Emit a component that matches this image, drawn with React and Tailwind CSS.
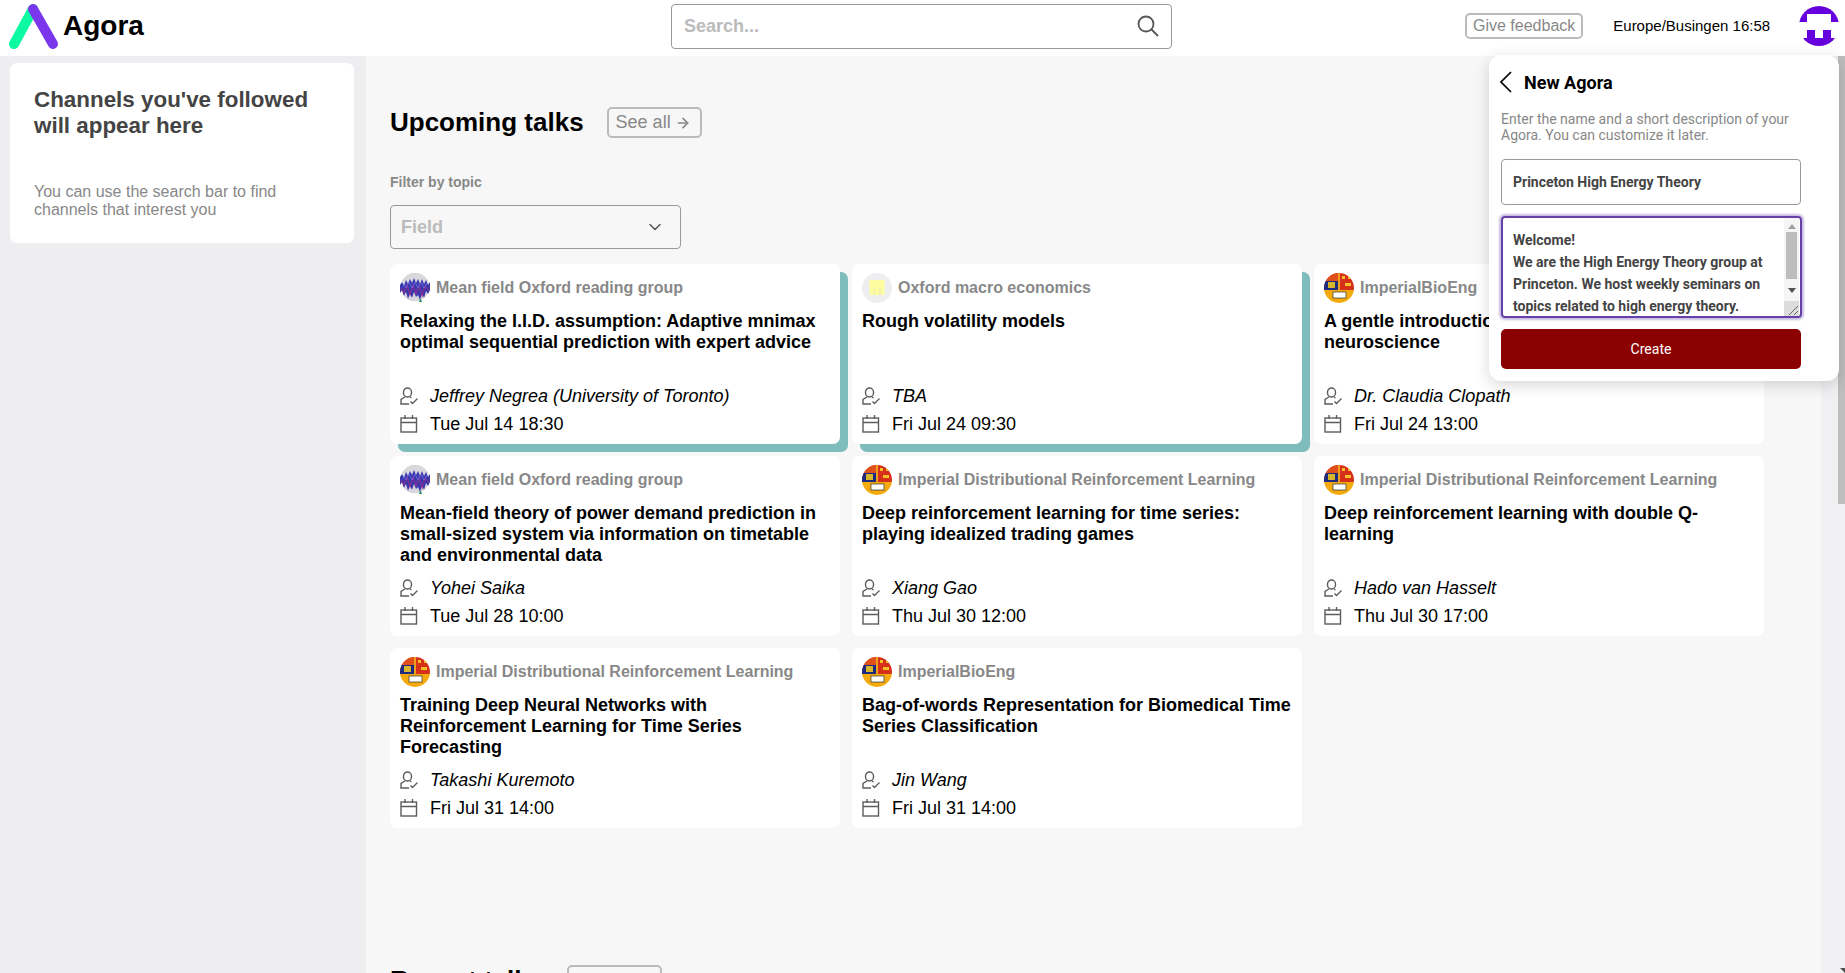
import React from 'react';
import { ArrowRight, ChevronDown } from 'lucide-react';

const talks = [
  { channel: 'Mean field Oxford reading group', avatar: 'wave', title: 'Relaxing the I.I.D. assumption: Adaptive mnimax optimal sequential prediction with expert advice', speaker: 'Jeffrey Negrea (University of Toronto)', date: 'Tue Jul 14 18:30', live: true },
  { channel: 'Oxford macro economics', avatar: 'macro', title: 'Rough volatility models', speaker: 'TBA', date: 'Fri Jul 24 09:30', live: true },
  { channel: 'ImperialBioEng', avatar: 'crest', title: 'A gentle introduction to computational neuroscience', speaker: 'Dr. Claudia Clopath', date: 'Fri Jul 24 13:00' },
  { channel: 'Mean field Oxford reading group', avatar: 'wave', title: 'Mean-field theory of power demand prediction in small-sized system via information on timetable and environmental data', speaker: 'Yohei Saika', date: 'Tue Jul 28 10:00' },
  { channel: 'Imperial Distributional Reinforcement Learning', avatar: 'crest', title: 'Deep reinforcement learning for time series: playing idealized trading games', speaker: 'Xiang Gao', date: 'Thu Jul 30 12:00' },
  { channel: 'Imperial Distributional Reinforcement Learning', avatar: 'crest', title: 'Deep reinforcement learning with double Q-learning', speaker: 'Hado van Hasselt', date: 'Thu Jul 30 17:00' },
  { channel: 'Imperial Distributional Reinforcement Learning', avatar: 'crest', title: 'Training Deep Neural Networks with Reinforcement Learning for Time Series Forecasting', speaker: 'Takashi Kuremoto', date: 'Fri Jul 31 14:00' },
  { channel: 'ImperialBioEng', avatar: 'crest', title: 'Bag-of-words Representation for Biomedical Time Series Classification', speaker: 'Jin Wang', date: 'Fri Jul 31 14:00' },
];

const Logo = () => (
  <svg width="48" height="44" viewBox="0 0 48 44" className="shrink-0 overflow-visible">
    <path d="M4 40 L23 5" stroke="#0bfaa2" strokeWidth="10" strokeLinecap="round" fill="none" />
    <path d="M23 5 L43 40" stroke="#7a36ec" strokeWidth="10" strokeLinecap="round" fill="none" />
  </svg>
);

const UserAvatar = () => (
  <svg width="40" height="40" viewBox="0 0 40 40" className="shrink-0">
    <clipPath id="user-circle">
      <circle cx="20" cy="20" r="20" />
    </clipPath>
    <g clipPath="url(#user-circle)" fill="#6600dd">
      <rect x="0" y="0" width="40" height="8" />
      <rect x="0" y="8" width="8" height="8" />
      <rect x="32" y="8" width="8" height="8" />
      <rect x="8" y="24" width="8" height="8" />
      <rect x="24" y="24" width="8" height="8" />
      <rect x="0" y="32" width="40" height="8" />
    </g>
  </svg>
);

const SearchIcon = () => (
  <svg width="22" height="22" viewBox="0 0 22 22" fill="none" stroke="#555" strokeWidth="1.8">
    <circle cx="9" cy="9" r="7.5" />
    <path d="M14.5 14.5 L21 21" />
  </svg>
);

const SpeakerIcon = () => (
  <svg width="18" height="18" viewBox="0 0 18 18" fill="none" stroke="#5c5c5c" strokeWidth="1.4" className="shrink-0">
    <path d="M7.5 1 a4 4 0 0 1 4 4 v1 a4 4 0 0 1 -8 0 v-1 a4 4 0 0 1 4 -4 z" />
    <path d="M5 10 l-4 2.5 v4.5 h8" />
    <path d="M10 10 l1.5 1" />
    <path d="M10.5 14.5 l2 2 l5 -5" />
  </svg>
);

const CalendarIcon = () => (
  <svg width="18" height="18" viewBox="0 0 18 18" fill="none" stroke="#5c5c5c" strokeWidth="1.4" className="shrink-0">
    <rect x="1" y="3" width="15.5" height="14" />
    <path d="M1 7.5 h15.5 M5 0 v4 M12.5 0 v4" />
  </svg>
);

const BackIcon = () => (
  <svg width="12" height="22" viewBox="0 0 12 22" fill="none" stroke="#000" strokeWidth="1.7" className="shrink-0 -ml-[1px]">
    <path d="M11 1 L1 11 L11 21" />
  </svg>
);

const ChannelAvatar = ({ kind }) => {
  if (kind === 'macro') {
    return (
      <svg width="30" height="30" viewBox="0 0 30 30" className="shrink-0">
        <circle cx="15" cy="15" r="15" fill="#eeeef0" />
        <rect x="7.5" y="7" width="15" height="15" fill="#fdfda0" />
        <path d="M12 14 v8 M18 14 v8" stroke="#eeeeb0" strokeWidth="1.5" />
      </svg>
    );
  }
  if (kind === 'crest') {
    return (
      <svg width="30" height="30" viewBox="0 0 30 30" className="shrink-0">
        <clipPath id="crest-clip">
          <circle cx="15" cy="15" r="15" />
        </clipPath>
        <g clipPath="url(#crest-clip)">
          <rect width="30" height="17" fill="#d6301a" />
          <rect x="0" y="0" width="14" height="8" fill="#e0501a" />
          <rect x="14" y="0" width="2" height="17" fill="#f0a020" />
          <rect y="8" width="14" height="9" fill="#1c2a80" />
          <rect x="4" y="9" width="7" height="6" fill="#d6b62c" />
          <rect x="18" y="3" width="3" height="3" fill="#f5c22a" />
          <rect x="24" y="3" width="3" height="3" fill="#f5c22a" />
          <rect x="21" y="10" width="6" height="3" fill="#f5c22a" />
          <rect y="17" width="30" height="13" fill="#f5ab0e" />
          <rect x="9" y="19" width="13" height="6" fill="#fff" stroke="#333" strokeWidth="0.7" />
        </g>
      </svg>
    );
  }
  return (
    <svg width="30" height="30" viewBox="0 0 30 30" className="shrink-0">
      <clipPath id="wave-clip">
        <circle cx="15" cy="14" r="14.5" />
      </clipPath>
      <circle cx="15" cy="14" r="14.5" fill="#d8d8dc" clipPath="url(#wave-clip)" />
      <path d="M0 12 L2 9 L4 13 L6 7 L8 11 L10 6 L12 10 L14 5 L16 10 L18 6 L20 11 L22 6 L24 11 L26 7 L28 12 L30 9 L30 17 L28 21 L26 18 L24 25 L22 20 L20 27 L18 22 L16 24 L14 19 L12 25 L10 20 L8 26 L6 19 L4 23 L2 17 L0 20 Z" fill="#3a38ae" />
      <path d="M1 15 L4 20 L7 12 L10 22 L13 12 L16 21 L19 13 L22 23 L25 13 L29 17" stroke="#8a2f8f" strokeWidth="1.1" fill="none" />
      <path d="M3 11 L6 15 L9 9 L12 15 L15 9 L18 15 L21 9 L24 15 L27 10" stroke="#6a6ae0" strokeWidth="0.9" fill="none" />
      <path d="M19 29 L20.5 25 L22 29 Z" fill="#2a8a6a" />
    </svg>
  );
};

const TalkCard = ({ talk }) => (
  <div className={`h-[180px] bg-white rounded-[7px] px-[10px] pt-[9px] ${talk.live ? 'shadow-[8px_8px_0_0_#7fbcbc]' : ''}`}>
    <div className="flex items-center gap-[6px] h-[30px]">
      <ChannelAvatar kind={talk.avatar} />
      <span className="text-[16px] font-bold text-[#888888]">{talk.channel}</span>
    </div>
    <div className="mt-[8px] h-[63px] text-[18px] leading-[21px] font-bold text-black">{talk.title}</div>
    <div className="mt-[8px] flex items-center gap-[12px] h-[28px]">
      <SpeakerIcon />
      <span className="text-[18px] italic text-black">{talk.speaker}</span>
    </div>
    <div className="flex items-center gap-[12px] h-[28px]">
      <CalendarIcon />
      <span className="text-[18px] text-black">{talk.date}</span>
    </div>
  </div>
);

const SeeAll = ({ className }) => (
  <button className={`h-[31px] pl-[7px] pr-[9px] flex items-center gap-[4px] border-2 border-[#bbbbbb] rounded-[5px] text-[18px] text-[#888888] ${className}`}>
    See all
    <ArrowRight size={16} strokeWidth={2.5} />
  </button>
);

const NewAgoraPanel = () => (
  <div className="absolute right-[6px] top-[55px] w-[350px] h-[326px] z-20 bg-white rounded-[12px] px-[12px] shadow-[0_4px_16px_rgba(0,0,0,0.16)] font-['Roboto',sans-serif]">
    <div className="flex items-center h-[54px] gap-[12px]">
      <BackIcon />
      <span className="text-[18px] font-bold text-black">New Agora</span>
    </div>
    <div className="mt-[2px] text-[14px] leading-[16px] text-[#888888]">
      Enter the name and a short description of your Agora. You can customize it later.
    </div>
    <div className="mt-[16px] w-[300px] h-[46px] flex items-center px-[11px] border border-[#999999] rounded-[4px] text-[14px] font-bold text-[#444444]">
      Princeton High Energy Theory
    </div>
    <div className="relative mt-[11px] w-[301px] h-[102px] pl-[10px] pr-[24px] pt-[11px] overflow-hidden border-2 border-[#6440a8] rounded-[4px] shadow-[0_0_2px_2px_rgba(100,64,168,0.35)] text-[14px] leading-[22px] font-bold text-[#444444]">
      <div>Welcome!</div>
      <div>We are the High Energy Theory group at Princeton. We host weekly seminars on topics related to high energy theory.</div>
      <div className="absolute right-[1px] top-0 bottom-0 w-[15px] bg-[#f5f5f5] flex flex-col items-center">
        <div className="mt-[6px] w-0 h-0 border-x-[4px] border-x-transparent border-b-[5px] border-b-[#a0a0a0]" />
        <div className="mt-[3px] w-[11px] h-[47px] bg-[#bdbdbd]" />
        <div className="mt-[9px] w-0 h-0 border-x-[4px] border-x-transparent border-t-[5px] border-t-[#505050]" />
        <div className="mt-auto w-[15px] h-[15px] bg-[#dcdcdc]">
          <svg width="15" height="15" viewBox="0 0 15 15" fill="none" stroke="#666" strokeWidth="1">
            <path d="M5 14 L14 5 M10 14 L14 10" />
          </svg>
        </div>
      </div>
    </div>
    <button className="mt-[11px] w-[300px] h-[40px] bg-[#8b0000] rounded-[5px] text-[14px] text-white">Create</button>
  </div>
);

export default function App() {
  return (
    <div className="relative h-screen flex flex-col overflow-hidden bg-white font-['Liberation_Sans',sans-serif]">
      <header className="h-[56px] shrink-0 flex items-center bg-white pl-[10px] pr-[6px]">
        <div className="w-[661px] -mt-[4px] flex items-center gap-[5px]">
          <Logo />
          <span className="text-[28px] font-bold text-black">Agora</span>
        </div>
        <div className="w-[501px] h-[45px] -mt-[4px] flex items-center justify-between pl-[12px] pr-[12px] border border-[#999999] rounded-[4px]">
          <span className="text-[18px] font-bold text-[#bbbbbb]">Search...</span>
          <SearchIcon />
        </div>
        <div className="ml-[293px] h-[26px] px-[6px] flex items-center border-2 border-[#bbbbbb] rounded-[5px] text-[16px] text-[#888888] -mt-[4px]">Give feedback</div>
        <span className="ml-[30px] text-[15px] text-black -mt-[4px]">Europe/Busingen 16:58</span>
        <div className="ml-auto -mt-[4px]">
          <UserAvatar />
        </div>
      </header>

      <div className="flex-1 min-h-0 flex">
        <aside className="w-[366px] shrink-0 bg-[#eeeef0] pl-[10px] pr-[12px] pt-[7px]">
          <div className="h-[180px] bg-white rounded-[7px] px-[24px] pt-[24px]">
            <div className="text-[22.4px] leading-[26px] font-bold text-[#444444]">Channels you've followed will appear here</div>
            <div className="mt-[44px] text-[16px] leading-[18px] text-[#888888]">You can use the search bar to find channels that interest you</div>
          </div>
        </aside>

        <main className="flex-1 min-w-0 bg-[#f7f7f7] pl-[24px] pt-[51px]">
          <div className="flex items-center h-[31px]">
            <h2 className="text-[26px] font-bold text-black">Upcoming talks</h2>
            <SeeAll className="ml-[23px]" />
          </div>
          <div className="mt-[36px] text-[14px] leading-[16px] font-bold text-[#888888]">Filter by topic</div>
          <div className="mt-[15px] w-[291px] h-[44px] flex items-center justify-between pl-[10px] pr-[15px] border border-[#999999] rounded-[4px]">
            <span className="text-[18px] font-bold text-[#bbbbbb]">Field</span>
            <ChevronDown size={20} strokeWidth={1.8} className="text-[#555555]" />
          </div>
          <div className="mt-[15px] grid grid-cols-[repeat(3,450px)] gap-[12px]">
            {talks.map((talk) => (
              <TalkCard key={talk.title} talk={talk} />
            ))}
          </div>
          <div className="mt-[137px] flex items-center h-[31px]">
            <h2 className="text-[26px] font-bold text-black">Recent talks</h2>
            <SeeAll className="ml-[24px]" />
          </div>
        </main>

        <div className="w-[24px] shrink-0 bg-[#f0f0f2]" />
      </div>

      <NewAgoraPanel />

      {/* page scrollbar */}
      <div className="absolute right-0 top-[56px] w-[7px] h-[448px] z-10 bg-[#bdbdbd]" />
      <div className="absolute right-0 bottom-0 w-0 h-0 z-10 border-l-[5px] border-l-transparent border-t-[5px] border-t-[#505050]" />
    </div>
  );
}
